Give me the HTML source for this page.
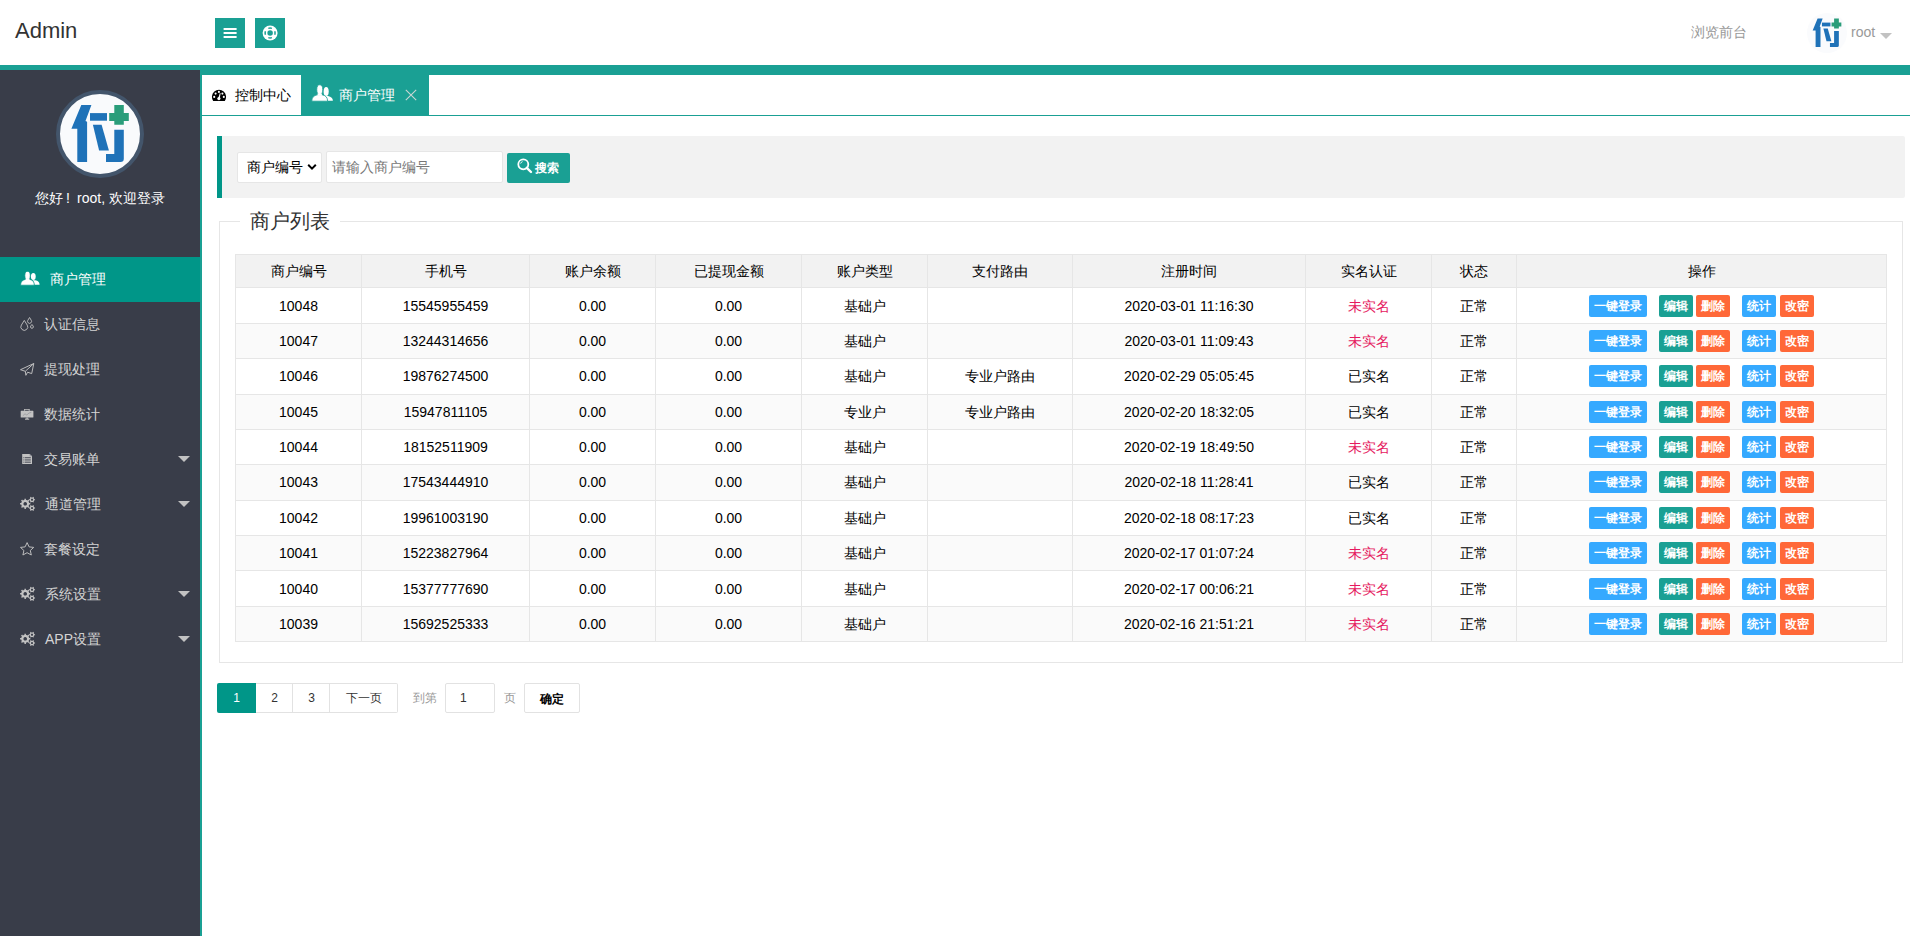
<!DOCTYPE html>
<html><head><meta charset="utf-8"><title>Admin</title>
<style>
*{margin:0;padding:0;box-sizing:border-box}
html,body{width:1910px;height:936px;overflow:hidden;background:#fff}
body{position:relative;font-family:"Liberation Sans",sans-serif;font-size:14px;color:#333}
.a{position:absolute}
.t{position:absolute;white-space:nowrap}
.c{text-align:center}
.ln{position:absolute;background:#e6e6e6}
.btn{position:absolute;height:22px;line-height:22px;color:#fff;font-size:12px;font-weight:bold;text-align:center;border-radius:2px}
.menu{position:absolute;left:0;width:200px;height:45px;color:#d4d4d4}
.menu .tx{position:absolute;left:44px;top:0;line-height:45px;font-size:14px}
.menu svg{position:absolute}
.caret{position:absolute;left:178px;top:19px;width:0;height:0;border-left:6px solid transparent;border-right:6px solid transparent;border-top:6px solid #c2c2c2}
</style></head><body>

<div class="t" style="left:15px;top:16px;font-size:22px;line-height:30px;color:#333">Admin</div>
<div class="a" style="left:215px;top:18px;width:30px;height:30px;background:#1aa094"><svg width="30" height="30" style="position:absolute;left:0;top:0"><rect x="8.6" y="10" width="13" height="2" fill="#fff"/><rect x="8.6" y="14" width="13" height="2" fill="#fff"/><rect x="8.6" y="18" width="13" height="2" fill="#fff"/></svg></div>
<div class="a" style="left:255px;top:18px;width:30px;height:30px;background:#1aa094"><svg width="30" height="30" style="position:absolute;left:0;top:0"><g transform="translate(15.1 15)"><circle r="7.5" fill="#fff"/><circle r="2.75" fill="#1aa094"/><path d="M4.67 -1.79A5 5 0 0 1 4.67 1.79M1.79 4.67A5 5 0 0 1 -1.79 4.67M-4.67 1.79A5 5 0 0 1 -4.67 -1.79M-1.79 -4.67A5 5 0 0 1 1.79 -4.67" fill="none" stroke="#1aa094" stroke-width="1.5"/></g></svg></div>
<div class="t" style="left:1691px;top:22px;line-height:20px;color:#999">浏览前台</div>
<svg class="a" style="left:1805px;top:11px" width="44" height="44" viewBox="1805 11 44 44"><circle cx="1827" cy="33" r="20" fill="#fafbfd"/><g transform="translate(1827 32.85) scale(0.5) translate(-100.1 -133.6)"><path fill="#1f72b8" d="M81.3 105.1H91.4L85.5 121.1L87.1 121.8V162.1H77.3V128.7H71.4Z"/>
<rect fill="#1f72b8" x="90" y="113.1" width="17" height="7.6"/>
<path fill="#1f72b8" d="M92.9 124.7H101.6L108.9 150.5H99.1Z"/>
<path fill="#1f72b8" d="M114.3 129.8H123.8V158.8A3.3 3.3 0 0 1 120.5 162.1H106V154.1H114.3Z"/>
<path fill="#2a9d7a" d="M114.3 105.1H123.8V113.1H128.8V121.1H123.8V124.7H114.3V121.1H109.2V113.1H114.3Z"/></g></svg>
<div class="t" style="left:1851px;top:22px;line-height:20px;color:#999">root</div>
<div class="a" style="left:1880px;top:33px;width:0;height:0;border-left:6px solid transparent;border-right:6px solid transparent;border-top:6px solid #c2c2c2"></div>
<div class="a" style="left:0;top:65px;width:1910px;height:5px;background:#1aa094"></div>
<div class="a" style="left:0;top:70px;width:200px;height:866px;background:#393d49"></div>
<div class="a" style="left:200px;top:70px;width:2px;height:866px;background:#1aa094"></div>
<div class="a" style="left:202px;top:70px;width:1708px;height:5px;background:#1aa094"></div>
<svg class="a" style="left:56px;top:90px" width="88" height="88" viewBox="56 90 88 88"><circle cx="100" cy="134" r="42" fill="#f9fafc" stroke="#43556b" stroke-width="4"/><path fill="#1f72b8" d="M81.3 105.1H91.4L85.5 121.1L87.1 121.8V162.1H77.3V128.7H71.4Z"/>
<rect fill="#1f72b8" x="90" y="113.1" width="17" height="7.6"/>
<path fill="#1f72b8" d="M92.9 124.7H101.6L108.9 150.5H99.1Z"/>
<path fill="#1f72b8" d="M114.3 129.8H123.8V158.8A3.3 3.3 0 0 1 120.5 162.1H106V154.1H114.3Z"/>
<path fill="#2a9d7a" d="M114.3 105.1H123.8V113.1H128.8V121.1H123.8V124.7H114.3V121.1H109.2V113.1H114.3Z"/></svg>
<div class="t c" style="left:0;top:188px;width:200px;line-height:20px;color:#fff">您好<span style="display:inline-block;width:14px;padding-left:3px;text-align:left">!</span>root, 欢迎登录</div>
<div class="menu" style="top:257px;background:#009688;color:#fff"><div class="tx" style="left:50px">商户管理</div></div>
<div class="menu" style="top:302px"><div class="tx" style="left:44px">认证信息</div></div>
<div class="menu" style="top:347px"><div class="tx" style="left:44px">提现处理</div></div>
<div class="menu" style="top:392px"><div class="tx" style="left:44px">数据统计</div></div>
<div class="menu" style="top:437px"><div class="tx" style="left:44px">交易账单</div><div class="caret"></div></div>
<div class="menu" style="top:482px"><div class="tx" style="left:45px">通道管理</div><div class="caret"></div></div>
<div class="menu" style="top:527px"><div class="tx" style="left:44px">套餐设定</div></div>
<div class="menu" style="top:572px"><div class="tx" style="left:45px">系统设置</div><div class="caret"></div></div>
<div class="menu" style="top:617px"><div class="tx" style="left:45px">APP设置</div><div class="caret"></div></div>
<svg class="a" style="left:20px;top:270px" width="21" height="16" viewBox="20 270 21 16"><g fill="#fff"><ellipse cx="33.3" cy="276.4" rx="2.4" ry="3.5"/><path d="M32.3 280.3L35.2 280.3C38.2 280.9 39.6 282.2 39.6 284.8L34.3 284.8C34.2 282.6 33.6 281.2 32.3 280.3Z"/></g><g fill="#fff" stroke="#009688" stroke-width="0.7"><ellipse cx="27.55" cy="275.6" rx="2.7" ry="4.2"/><path d="M20.6 285.2C20.6 281.6 22.3 280.1 25.3 279.4L29.8 279.4C32.8 280.1 34.3 281.6 34.3 285.2Z"/></g><rect x="25.6" y="278.5" width="3.9" height="2" fill="#fff"/></svg>
<svg class="a" style="left:18px;top:315px" width="18" height="18" viewBox="18 315 18 18"><g fill="none" stroke="#c2c2c2" stroke-width="0.9"><path d="M24.3 320.4 L21.38 325.07 A3.45 3.45 0 1 0 27.22 325.07 Z"/><path d="M29.55 317.5 L27.84 320.31 A2.0 2.0 0 1 0 31.26 320.31 Z"/><path d="M31.95 324.5 L30.81 325.96 A1.45 1.45 0 1 0 33.09 325.96 Z"/></g></svg>
<svg class="a" style="left:18px;top:361px" width="18" height="17" viewBox="18 361 18 17"><g fill="none" stroke="#c2c2c2" stroke-width="0.95" stroke-linejoin="round"><path d="M20.5 369.7L33.8 363.5L31.7 373.6L27.6 372.2L25.9 375.3L25.3 371.3Z"/><path d="M25.3 371.3L33.8 363.5"/></g></svg>
<svg class="a" style="left:18px;top:407px" width="18" height="14" viewBox="18 407 18 14"><g fill="#c2c2c2"><path d="M24.1 409H29.7V410.8H28.7V409.8H25.1V410.8H24.1Z"/><rect x="20.7" y="410.8" width="12.7" height="6.8" rx="0.6"/><rect x="26.3" y="417.6" width="1.6" height="1.2"/><rect x="25" y="418.6" width="4.2" height="1.1"/></g><path d="M22.8 415.8L25 413.8L26.8 415L29 413L31.3 412.4" fill="none" stroke="#8a8c92" stroke-width="0.6"/></svg>
<svg class="a" style="left:20px;top:452px" width="14" height="14" viewBox="20 452 14 14"><path d="M22.2 453.9H29.6L32 456.3V464H22.2Z" fill="#c2c2c2"/><path d="M29.6 453.9V456.3H32" fill="#9a9ca2"/><g fill="#393d49"><rect x="23.4" y="457.3" width="1" height="0.9"/><rect x="25" y="457.3" width="5.8" height="0.9"/><rect x="23.4" y="459.5" width="1" height="0.9"/><rect x="25" y="459.5" width="5.8" height="0.9"/><rect x="23.4" y="461.7" width="1" height="0.9"/><rect x="25" y="461.7" width="5.8" height="0.9"/></g></svg>
<svg class="a" style="left:18px;top:540px" width="18" height="17" viewBox="18 540 18 17"><path d="M27.1 542.6L29.1 546.9L33.7 547.4L30.3 550.5L31.3 555L27.1 552.7L22.9 555L23.9 550.5L20.5 547.4L25.1 546.9Z" fill="none" stroke="#c2c2c2" stroke-width="0.95" stroke-linejoin="round"/></svg>
<svg class="a" style="left:18px;top:494px" width="18" height="18" viewBox="18 494 18 18"><g fill="#c2c2c2" fill-rule="evenodd"><path d="M29.02 502.62 L29.14 503.11 L30.34 503.04 L30.34 504.56 L29.14 504.49 L29.02 504.98 L28.74 505.67 L28.47 506.10 L29.38 506.90 L28.30 507.98 L27.50 507.07 L27.07 507.34 L26.38 507.62 L25.89 507.74 L25.96 508.94 L24.44 508.94 L24.51 507.74 L24.02 507.62 L23.33 507.34 L22.90 507.07 L22.10 507.98 L21.02 506.90 L21.93 506.10 L21.66 505.67 L21.38 504.98 L21.26 504.49 L20.06 504.56 L20.06 503.04 L21.26 503.11 L21.38 502.62 L21.66 501.93 L21.93 501.50 L21.02 500.70 L22.10 499.62 L22.90 500.53 L23.33 500.26 L24.02 499.98 L24.51 499.86 L24.44 498.66 L25.96 498.66 L25.89 499.86 L26.38 499.98 L27.07 500.26 L27.50 500.53 L28.30 499.62 L29.38 500.70 L28.47 501.50 L28.74 501.93Z M25.2 502.00 A1.8 1.8 0 1 0 25.21 502.00Z"/><path d="M34.12 498.81 L34.25 499.22 L35.05 499.15 L35.05 500.25 L34.25 500.18 L34.12 500.59 L33.83 501.09 L33.54 501.41 L34.00 502.07 L33.05 502.62 L32.71 501.89 L32.29 501.98 L31.71 501.98 L31.29 501.89 L30.95 502.62 L30.00 502.07 L30.46 501.41 L30.17 501.09 L29.88 500.59 L29.75 500.18 L28.95 500.25 L28.95 499.15 L29.75 499.22 L29.88 498.81 L30.17 498.31 L30.46 497.99 L30.00 497.33 L30.95 496.78 L31.29 497.51 L31.71 497.42 L32.29 497.42 L32.71 497.51 L33.05 496.78 L34.00 497.33 L33.54 497.99 L33.83 498.31Z M32 498.60 A1.1 1.1 0 1 0 32.01 498.60Z"/><path d="M34.12 507.11 L34.25 507.52 L35.05 507.45 L35.05 508.55 L34.25 508.48 L34.12 508.89 L33.83 509.39 L33.54 509.71 L34.00 510.37 L33.05 510.92 L32.71 510.19 L32.29 510.28 L31.71 510.28 L31.29 510.19 L30.95 510.92 L30.00 510.37 L30.46 509.71 L30.17 509.39 L29.88 508.89 L29.75 508.48 L28.95 508.55 L28.95 507.45 L29.75 507.52 L29.88 507.11 L30.17 506.61 L30.46 506.29 L30.00 505.63 L30.95 505.08 L31.29 505.81 L31.71 505.72 L32.29 505.72 L32.71 505.81 L33.05 505.08 L34.00 505.63 L33.54 506.29 L33.83 506.61Z M32 506.90 A1.1 1.1 0 1 0 32.01 506.90Z"/></g></svg>
<svg class="a" style="left:18px;top:584px" width="18" height="18" viewBox="18 584 18 18"><g fill="#c2c2c2" fill-rule="evenodd"><path d="M29.02 592.62 L29.14 593.11 L30.34 593.04 L30.34 594.56 L29.14 594.49 L29.02 594.98 L28.74 595.67 L28.47 596.10 L29.38 596.90 L28.30 597.98 L27.50 597.07 L27.07 597.34 L26.38 597.62 L25.89 597.74 L25.96 598.94 L24.44 598.94 L24.51 597.74 L24.02 597.62 L23.33 597.34 L22.90 597.07 L22.10 597.98 L21.02 596.90 L21.93 596.10 L21.66 595.67 L21.38 594.98 L21.26 594.49 L20.06 594.56 L20.06 593.04 L21.26 593.11 L21.38 592.62 L21.66 591.93 L21.93 591.50 L21.02 590.70 L22.10 589.62 L22.90 590.53 L23.33 590.26 L24.02 589.98 L24.51 589.86 L24.44 588.66 L25.96 588.66 L25.89 589.86 L26.38 589.98 L27.07 590.26 L27.50 590.53 L28.30 589.62 L29.38 590.70 L28.47 591.50 L28.74 591.93Z M25.2 592.00 A1.8 1.8 0 1 0 25.21 592.00Z"/><path d="M34.12 588.81 L34.25 589.22 L35.05 589.15 L35.05 590.25 L34.25 590.18 L34.12 590.59 L33.83 591.09 L33.54 591.41 L34.00 592.07 L33.05 592.62 L32.71 591.89 L32.29 591.98 L31.71 591.98 L31.29 591.89 L30.95 592.62 L30.00 592.07 L30.46 591.41 L30.17 591.09 L29.88 590.59 L29.75 590.18 L28.95 590.25 L28.95 589.15 L29.75 589.22 L29.88 588.81 L30.17 588.31 L30.46 587.99 L30.00 587.33 L30.95 586.78 L31.29 587.51 L31.71 587.42 L32.29 587.42 L32.71 587.51 L33.05 586.78 L34.00 587.33 L33.54 587.99 L33.83 588.31Z M32 588.60 A1.1 1.1 0 1 0 32.01 588.60Z"/><path d="M34.12 597.11 L34.25 597.52 L35.05 597.45 L35.05 598.55 L34.25 598.48 L34.12 598.89 L33.83 599.39 L33.54 599.71 L34.00 600.37 L33.05 600.92 L32.71 600.19 L32.29 600.28 L31.71 600.28 L31.29 600.19 L30.95 600.92 L30.00 600.37 L30.46 599.71 L30.17 599.39 L29.88 598.89 L29.75 598.48 L28.95 598.55 L28.95 597.45 L29.75 597.52 L29.88 597.11 L30.17 596.61 L30.46 596.29 L30.00 595.63 L30.95 595.08 L31.29 595.81 L31.71 595.72 L32.29 595.72 L32.71 595.81 L33.05 595.08 L34.00 595.63 L33.54 596.29 L33.83 596.61Z M32 596.90 A1.1 1.1 0 1 0 32.01 596.90Z"/></g></svg>
<svg class="a" style="left:18px;top:629px" width="18" height="18" viewBox="18 629 18 18"><g fill="#c2c2c2" fill-rule="evenodd"><path d="M29.02 637.62 L29.14 638.11 L30.34 638.04 L30.34 639.56 L29.14 639.49 L29.02 639.98 L28.74 640.67 L28.47 641.10 L29.38 641.90 L28.30 642.98 L27.50 642.07 L27.07 642.34 L26.38 642.62 L25.89 642.74 L25.96 643.94 L24.44 643.94 L24.51 642.74 L24.02 642.62 L23.33 642.34 L22.90 642.07 L22.10 642.98 L21.02 641.90 L21.93 641.10 L21.66 640.67 L21.38 639.98 L21.26 639.49 L20.06 639.56 L20.06 638.04 L21.26 638.11 L21.38 637.62 L21.66 636.93 L21.93 636.50 L21.02 635.70 L22.10 634.62 L22.90 635.53 L23.33 635.26 L24.02 634.98 L24.51 634.86 L24.44 633.66 L25.96 633.66 L25.89 634.86 L26.38 634.98 L27.07 635.26 L27.50 635.53 L28.30 634.62 L29.38 635.70 L28.47 636.50 L28.74 636.93Z M25.2 637.00 A1.8 1.8 0 1 0 25.21 637.00Z"/><path d="M34.12 633.81 L34.25 634.22 L35.05 634.15 L35.05 635.25 L34.25 635.18 L34.12 635.59 L33.83 636.09 L33.54 636.41 L34.00 637.07 L33.05 637.62 L32.71 636.89 L32.29 636.98 L31.71 636.98 L31.29 636.89 L30.95 637.62 L30.00 637.07 L30.46 636.41 L30.17 636.09 L29.88 635.59 L29.75 635.18 L28.95 635.25 L28.95 634.15 L29.75 634.22 L29.88 633.81 L30.17 633.31 L30.46 632.99 L30.00 632.33 L30.95 631.78 L31.29 632.51 L31.71 632.42 L32.29 632.42 L32.71 632.51 L33.05 631.78 L34.00 632.33 L33.54 632.99 L33.83 633.31Z M32 633.60 A1.1 1.1 0 1 0 32.01 633.60Z"/><path d="M34.12 642.11 L34.25 642.52 L35.05 642.45 L35.05 643.55 L34.25 643.48 L34.12 643.89 L33.83 644.39 L33.54 644.71 L34.00 645.37 L33.05 645.92 L32.71 645.19 L32.29 645.28 L31.71 645.28 L31.29 645.19 L30.95 645.92 L30.00 645.37 L30.46 644.71 L30.17 644.39 L29.88 643.89 L29.75 643.48 L28.95 643.55 L28.95 642.45 L29.75 642.52 L29.88 642.11 L30.17 641.61 L30.46 641.29 L30.00 640.63 L30.95 640.08 L31.29 640.81 L31.71 640.72 L32.29 640.72 L32.71 640.81 L33.05 640.08 L34.00 640.63 L33.54 641.29 L33.83 641.61Z M32 641.90 A1.1 1.1 0 1 0 32.01 641.90Z"/></g></svg>
<div class="a" style="left:202px;top:115px;width:1708px;height:1px;background:#1aa094"></div>
<svg class="a" style="left:210px;top:88px" width="18" height="14" viewBox="210 88 18 14"><path d="M213.2 100.9A7.05 7.05 0 1 1 224.8 100.9Z" fill="#000"/><g fill="#fff"><circle cx="218.9" cy="91.9" r="1.05"/><circle cx="215.6" cy="93.6" r="1.05"/><circle cx="222.4" cy="93.6" r="1.05"/><circle cx="214.2" cy="96.9" r="1.05"/><circle cx="223.8" cy="96.9" r="1.05"/><circle cx="218.9" cy="98.6" r="1.6"/><path d="M218.1 98.4L219.9 93.1L220.6 93.3L219.7 98.8Z"/></g></svg>
<div class="t" style="left:235px;top:85px;line-height:20px;color:#000">控制中心</div>
<div class="a" style="left:301px;top:70px;width:128px;height:45px;background:#1aa094"></div>
<svg class="a" style="left:310px;top:83px" width="24" height="19" viewBox="310 83 24 19"><g fill="#fff"><ellipse cx="326.15" cy="91.4" rx="2.55" ry="4.5"/><path d="M325 96L328 96C331.2 96.8 332.9 98 332.9 100.8H327.2C327.1 98.8 326.5 97 325 96Z"/></g><g fill="#fff" stroke="#1aa094" stroke-width="0.8"><ellipse cx="319.75" cy="89.7" rx="3" ry="4.9"/><path d="M311.8 101.2C311.8 97.4 313.7 95.6 317.3 94.8L322.2 94.8C325.8 95.6 327.6 97.4 327.6 101.2Z"/></g><rect x="317.6" y="93.6" width="4.3" height="2.2" fill="#fff"/></svg>
<div class="t" style="left:339px;top:85px;line-height:20px;color:#fff">商户管理</div>
<svg class="a" style="left:405px;top:89px" width="12" height="12" viewBox="0 0 12 12"><path d="M0.8 0.8L11.2 11.2M11.2 0.8L0.8 11.2" stroke="#c9d6d4" stroke-width="1.1"/></svg>
<div class="a" style="left:217px;top:136px;width:1688px;height:62px;background:#f2f2f2;border-left:5px solid #009688;border-radius:0 2px 2px 0"></div>
<div class="a" style="left:237px;top:152px;width:85px;height:31px;background:#fff;border:1px solid #e6e6e6;border-radius:2px"></div>
<div class="t" style="left:247px;top:157px;line-height:20px;color:#000">商户编号</div>
<svg class="a" style="left:307px;top:163px" width="10" height="8" viewBox="0 0 10 8"><path d="M1.2 1.8L5 5.6L8.8 1.8" fill="none" stroke="#000" stroke-width="2"/></svg>
<div class="a" style="left:326px;top:151px;width:177px;height:32px;background:#fff;border:1px solid #e6e6e6;border-radius:2px"></div>
<div class="t" style="left:332px;top:157px;line-height:20px;color:#777">请输入商户编号</div>
<div class="a" style="left:507px;top:153px;width:63px;height:30px;background:#1aa094;border-radius:2px"></div>
<svg class="a" style="left:517px;top:158px" width="16" height="16" viewBox="0 0 16 16"><circle cx="6.3" cy="6.3" r="5" fill="none" stroke="#fff" stroke-width="1.8"/><path d="M9.8 9.8L14 14" stroke="#fff" stroke-width="2.4" stroke-linecap="round"/><path d="M3.6 5.5A3 3 0 0 1 5.5 3.6" stroke="#fff" stroke-width="1" fill="none"/></svg>
<div class="t" style="left:535px;top:158px;line-height:20px;font-size:12px;font-weight:bold;color:#fff">搜索</div>
<div class="a" style="left:219px;top:221px;width:1684px;height:442px;border:1px solid #e6e6e6"></div>
<div class="a" style="left:240px;top:210px;width:100px;height:25px;background:#fff"></div>
<div class="t" style="left:250px;top:206px;line-height:30px;font-size:20px;color:#333">商户列表</div>
<div class="a" style="left:235px;top:254px;width:1652px;height:33px;background:#f2f2f2"></div>
<div class="a" style="left:235px;top:323px;width:1652px;height:35px;background:#fafafa"></div>
<div class="a" style="left:235px;top:394px;width:1652px;height:35px;background:#fafafa"></div>
<div class="a" style="left:235px;top:464px;width:1652px;height:36px;background:#fafafa"></div>
<div class="a" style="left:235px;top:535px;width:1652px;height:35px;background:#fafafa"></div>
<div class="a" style="left:235px;top:606px;width:1652px;height:35px;background:#fafafa"></div>
<div class="ln" style="left:235px;top:254px;width:1652px;height:1px"></div>
<div class="ln" style="left:235px;top:287px;width:1652px;height:1px"></div>
<div class="ln" style="left:235px;top:323px;width:1652px;height:1px"></div>
<div class="ln" style="left:235px;top:358px;width:1652px;height:1px"></div>
<div class="ln" style="left:235px;top:394px;width:1652px;height:1px"></div>
<div class="ln" style="left:235px;top:429px;width:1652px;height:1px"></div>
<div class="ln" style="left:235px;top:464px;width:1652px;height:1px"></div>
<div class="ln" style="left:235px;top:500px;width:1652px;height:1px"></div>
<div class="ln" style="left:235px;top:535px;width:1652px;height:1px"></div>
<div class="ln" style="left:235px;top:570px;width:1652px;height:1px"></div>
<div class="ln" style="left:235px;top:606px;width:1652px;height:1px"></div>
<div class="ln" style="left:235px;top:641px;width:1652px;height:1px"></div>
<div class="ln" style="left:235px;top:254px;width:1px;height:388px"></div>
<div class="ln" style="left:361px;top:254px;width:1px;height:388px"></div>
<div class="ln" style="left:529px;top:254px;width:1px;height:388px"></div>
<div class="ln" style="left:655px;top:254px;width:1px;height:388px"></div>
<div class="ln" style="left:801px;top:254px;width:1px;height:388px"></div>
<div class="ln" style="left:927px;top:254px;width:1px;height:388px"></div>
<div class="ln" style="left:1072px;top:254px;width:1px;height:388px"></div>
<div class="ln" style="left:1305px;top:254px;width:1px;height:388px"></div>
<div class="ln" style="left:1431px;top:254px;width:1px;height:388px"></div>
<div class="ln" style="left:1516px;top:254px;width:1px;height:388px"></div>
<div class="ln" style="left:1886px;top:254px;width:1px;height:388px"></div>
<div class="t c" style="left:236px;top:261px;width:125px;line-height:20px;color:#000">商户编号</div>
<div class="t c" style="left:362px;top:261px;width:167px;line-height:20px;color:#000">手机号</div>
<div class="t c" style="left:530px;top:261px;width:125px;line-height:20px;color:#000">账户余额</div>
<div class="t c" style="left:656px;top:261px;width:145px;line-height:20px;color:#000">已提现金额</div>
<div class="t c" style="left:802px;top:261px;width:125px;line-height:20px;color:#000">账户类型</div>
<div class="t c" style="left:928px;top:261px;width:144px;line-height:20px;color:#000">支付路由</div>
<div class="t c" style="left:1073px;top:261px;width:232px;line-height:20px;color:#000">注册时间</div>
<div class="t c" style="left:1306px;top:261px;width:125px;line-height:20px;color:#000">实名认证</div>
<div class="t c" style="left:1432px;top:261px;width:84px;line-height:20px;color:#000">状态</div>
<div class="t c" style="left:1517px;top:261px;width:369px;line-height:20px;color:#000">操作</div>
<div class="t c" style="left:236px;top:296px;width:125px;line-height:20px;color:#000">10048</div>
<div class="t c" style="left:362px;top:296px;width:167px;line-height:20px;color:#000">15545955459</div>
<div class="t c" style="left:530px;top:296px;width:125px;line-height:20px;color:#000">0.00</div>
<div class="t c" style="left:656px;top:296px;width:145px;line-height:20px;color:#000">0.00</div>
<div class="t c" style="left:802px;top:296px;width:125px;line-height:20px;color:#000">基础户</div>
<div class="t c" style="left:928px;top:296px;width:144px;line-height:20px;color:#000"></div>
<div class="t c" style="left:1073px;top:296px;width:232px;line-height:20px;color:#000">2020-03-01 11:16:30</div>
<div class="t c" style="left:1306px;top:296px;width:125px;line-height:20px;color:#e5195e">未实名</div>
<div class="t c" style="left:1432px;top:296px;width:84px;line-height:20px;color:#000">正常</div>
<div class="btn" style="left:1589px;top:295px;width:58px;background:#35a9ff">一键登录</div>
<div class="btn" style="left:1659px;top:295px;width:34px;background:#1aa094">编辑</div>
<div class="btn" style="left:1696px;top:295px;width:34px;background:#ff6838">删除</div>
<div class="btn" style="left:1742px;top:295px;width:34px;background:#35a9ff">统计</div>
<div class="btn" style="left:1780px;top:295px;width:34px;background:#ff6838">改密</div>
<div class="t c" style="left:236px;top:331px;width:125px;line-height:20px;color:#000">10047</div>
<div class="t c" style="left:362px;top:331px;width:167px;line-height:20px;color:#000">13244314656</div>
<div class="t c" style="left:530px;top:331px;width:125px;line-height:20px;color:#000">0.00</div>
<div class="t c" style="left:656px;top:331px;width:145px;line-height:20px;color:#000">0.00</div>
<div class="t c" style="left:802px;top:331px;width:125px;line-height:20px;color:#000">基础户</div>
<div class="t c" style="left:928px;top:331px;width:144px;line-height:20px;color:#000"></div>
<div class="t c" style="left:1073px;top:331px;width:232px;line-height:20px;color:#000">2020-03-01 11:09:43</div>
<div class="t c" style="left:1306px;top:331px;width:125px;line-height:20px;color:#e5195e">未实名</div>
<div class="t c" style="left:1432px;top:331px;width:84px;line-height:20px;color:#000">正常</div>
<div class="btn" style="left:1589px;top:330px;width:58px;background:#35a9ff">一键登录</div>
<div class="btn" style="left:1659px;top:330px;width:34px;background:#1aa094">编辑</div>
<div class="btn" style="left:1696px;top:330px;width:34px;background:#ff6838">删除</div>
<div class="btn" style="left:1742px;top:330px;width:34px;background:#35a9ff">统计</div>
<div class="btn" style="left:1780px;top:330px;width:34px;background:#ff6838">改密</div>
<div class="t c" style="left:236px;top:366px;width:125px;line-height:20px;color:#000">10046</div>
<div class="t c" style="left:362px;top:366px;width:167px;line-height:20px;color:#000">19876274500</div>
<div class="t c" style="left:530px;top:366px;width:125px;line-height:20px;color:#000">0.00</div>
<div class="t c" style="left:656px;top:366px;width:145px;line-height:20px;color:#000">0.00</div>
<div class="t c" style="left:802px;top:366px;width:125px;line-height:20px;color:#000">基础户</div>
<div class="t c" style="left:928px;top:366px;width:144px;line-height:20px;color:#000">专业户路由</div>
<div class="t c" style="left:1073px;top:366px;width:232px;line-height:20px;color:#000">2020-02-29 05:05:45</div>
<div class="t c" style="left:1306px;top:366px;width:125px;line-height:20px;color:#000">已实名</div>
<div class="t c" style="left:1432px;top:366px;width:84px;line-height:20px;color:#000">正常</div>
<div class="btn" style="left:1589px;top:365px;width:58px;background:#35a9ff">一键登录</div>
<div class="btn" style="left:1659px;top:365px;width:34px;background:#1aa094">编辑</div>
<div class="btn" style="left:1696px;top:365px;width:34px;background:#ff6838">删除</div>
<div class="btn" style="left:1742px;top:365px;width:34px;background:#35a9ff">统计</div>
<div class="btn" style="left:1780px;top:365px;width:34px;background:#ff6838">改密</div>
<div class="t c" style="left:236px;top:402px;width:125px;line-height:20px;color:#000">10045</div>
<div class="t c" style="left:362px;top:402px;width:167px;line-height:20px;color:#000">15947811105</div>
<div class="t c" style="left:530px;top:402px;width:125px;line-height:20px;color:#000">0.00</div>
<div class="t c" style="left:656px;top:402px;width:145px;line-height:20px;color:#000">0.00</div>
<div class="t c" style="left:802px;top:402px;width:125px;line-height:20px;color:#000">专业户</div>
<div class="t c" style="left:928px;top:402px;width:144px;line-height:20px;color:#000">专业户路由</div>
<div class="t c" style="left:1073px;top:402px;width:232px;line-height:20px;color:#000">2020-02-20 18:32:05</div>
<div class="t c" style="left:1306px;top:402px;width:125px;line-height:20px;color:#000">已实名</div>
<div class="t c" style="left:1432px;top:402px;width:84px;line-height:20px;color:#000">正常</div>
<div class="btn" style="left:1589px;top:401px;width:58px;background:#35a9ff">一键登录</div>
<div class="btn" style="left:1659px;top:401px;width:34px;background:#1aa094">编辑</div>
<div class="btn" style="left:1696px;top:401px;width:34px;background:#ff6838">删除</div>
<div class="btn" style="left:1742px;top:401px;width:34px;background:#35a9ff">统计</div>
<div class="btn" style="left:1780px;top:401px;width:34px;background:#ff6838">改密</div>
<div class="t c" style="left:236px;top:437px;width:125px;line-height:20px;color:#000">10044</div>
<div class="t c" style="left:362px;top:437px;width:167px;line-height:20px;color:#000">18152511909</div>
<div class="t c" style="left:530px;top:437px;width:125px;line-height:20px;color:#000">0.00</div>
<div class="t c" style="left:656px;top:437px;width:145px;line-height:20px;color:#000">0.00</div>
<div class="t c" style="left:802px;top:437px;width:125px;line-height:20px;color:#000">基础户</div>
<div class="t c" style="left:928px;top:437px;width:144px;line-height:20px;color:#000"></div>
<div class="t c" style="left:1073px;top:437px;width:232px;line-height:20px;color:#000">2020-02-19 18:49:50</div>
<div class="t c" style="left:1306px;top:437px;width:125px;line-height:20px;color:#e5195e">未实名</div>
<div class="t c" style="left:1432px;top:437px;width:84px;line-height:20px;color:#000">正常</div>
<div class="btn" style="left:1589px;top:436px;width:58px;background:#35a9ff">一键登录</div>
<div class="btn" style="left:1659px;top:436px;width:34px;background:#1aa094">编辑</div>
<div class="btn" style="left:1696px;top:436px;width:34px;background:#ff6838">删除</div>
<div class="btn" style="left:1742px;top:436px;width:34px;background:#35a9ff">统计</div>
<div class="btn" style="left:1780px;top:436px;width:34px;background:#ff6838">改密</div>
<div class="t c" style="left:236px;top:472px;width:125px;line-height:20px;color:#000">10043</div>
<div class="t c" style="left:362px;top:472px;width:167px;line-height:20px;color:#000">17543444910</div>
<div class="t c" style="left:530px;top:472px;width:125px;line-height:20px;color:#000">0.00</div>
<div class="t c" style="left:656px;top:472px;width:145px;line-height:20px;color:#000">0.00</div>
<div class="t c" style="left:802px;top:472px;width:125px;line-height:20px;color:#000">基础户</div>
<div class="t c" style="left:928px;top:472px;width:144px;line-height:20px;color:#000"></div>
<div class="t c" style="left:1073px;top:472px;width:232px;line-height:20px;color:#000">2020-02-18 11:28:41</div>
<div class="t c" style="left:1306px;top:472px;width:125px;line-height:20px;color:#000">已实名</div>
<div class="t c" style="left:1432px;top:472px;width:84px;line-height:20px;color:#000">正常</div>
<div class="btn" style="left:1589px;top:471px;width:58px;background:#35a9ff">一键登录</div>
<div class="btn" style="left:1659px;top:471px;width:34px;background:#1aa094">编辑</div>
<div class="btn" style="left:1696px;top:471px;width:34px;background:#ff6838">删除</div>
<div class="btn" style="left:1742px;top:471px;width:34px;background:#35a9ff">统计</div>
<div class="btn" style="left:1780px;top:471px;width:34px;background:#ff6838">改密</div>
<div class="t c" style="left:236px;top:508px;width:125px;line-height:20px;color:#000">10042</div>
<div class="t c" style="left:362px;top:508px;width:167px;line-height:20px;color:#000">19961003190</div>
<div class="t c" style="left:530px;top:508px;width:125px;line-height:20px;color:#000">0.00</div>
<div class="t c" style="left:656px;top:508px;width:145px;line-height:20px;color:#000">0.00</div>
<div class="t c" style="left:802px;top:508px;width:125px;line-height:20px;color:#000">基础户</div>
<div class="t c" style="left:928px;top:508px;width:144px;line-height:20px;color:#000"></div>
<div class="t c" style="left:1073px;top:508px;width:232px;line-height:20px;color:#000">2020-02-18 08:17:23</div>
<div class="t c" style="left:1306px;top:508px;width:125px;line-height:20px;color:#000">已实名</div>
<div class="t c" style="left:1432px;top:508px;width:84px;line-height:20px;color:#000">正常</div>
<div class="btn" style="left:1589px;top:507px;width:58px;background:#35a9ff">一键登录</div>
<div class="btn" style="left:1659px;top:507px;width:34px;background:#1aa094">编辑</div>
<div class="btn" style="left:1696px;top:507px;width:34px;background:#ff6838">删除</div>
<div class="btn" style="left:1742px;top:507px;width:34px;background:#35a9ff">统计</div>
<div class="btn" style="left:1780px;top:507px;width:34px;background:#ff6838">改密</div>
<div class="t c" style="left:236px;top:543px;width:125px;line-height:20px;color:#000">10041</div>
<div class="t c" style="left:362px;top:543px;width:167px;line-height:20px;color:#000">15223827964</div>
<div class="t c" style="left:530px;top:543px;width:125px;line-height:20px;color:#000">0.00</div>
<div class="t c" style="left:656px;top:543px;width:145px;line-height:20px;color:#000">0.00</div>
<div class="t c" style="left:802px;top:543px;width:125px;line-height:20px;color:#000">基础户</div>
<div class="t c" style="left:928px;top:543px;width:144px;line-height:20px;color:#000"></div>
<div class="t c" style="left:1073px;top:543px;width:232px;line-height:20px;color:#000">2020-02-17 01:07:24</div>
<div class="t c" style="left:1306px;top:543px;width:125px;line-height:20px;color:#e5195e">未实名</div>
<div class="t c" style="left:1432px;top:543px;width:84px;line-height:20px;color:#000">正常</div>
<div class="btn" style="left:1589px;top:542px;width:58px;background:#35a9ff">一键登录</div>
<div class="btn" style="left:1659px;top:542px;width:34px;background:#1aa094">编辑</div>
<div class="btn" style="left:1696px;top:542px;width:34px;background:#ff6838">删除</div>
<div class="btn" style="left:1742px;top:542px;width:34px;background:#35a9ff">统计</div>
<div class="btn" style="left:1780px;top:542px;width:34px;background:#ff6838">改密</div>
<div class="t c" style="left:236px;top:579px;width:125px;line-height:20px;color:#000">10040</div>
<div class="t c" style="left:362px;top:579px;width:167px;line-height:20px;color:#000">15377777690</div>
<div class="t c" style="left:530px;top:579px;width:125px;line-height:20px;color:#000">0.00</div>
<div class="t c" style="left:656px;top:579px;width:145px;line-height:20px;color:#000">0.00</div>
<div class="t c" style="left:802px;top:579px;width:125px;line-height:20px;color:#000">基础户</div>
<div class="t c" style="left:928px;top:579px;width:144px;line-height:20px;color:#000"></div>
<div class="t c" style="left:1073px;top:579px;width:232px;line-height:20px;color:#000">2020-02-17 00:06:21</div>
<div class="t c" style="left:1306px;top:579px;width:125px;line-height:20px;color:#e5195e">未实名</div>
<div class="t c" style="left:1432px;top:579px;width:84px;line-height:20px;color:#000">正常</div>
<div class="btn" style="left:1589px;top:578px;width:58px;background:#35a9ff">一键登录</div>
<div class="btn" style="left:1659px;top:578px;width:34px;background:#1aa094">编辑</div>
<div class="btn" style="left:1696px;top:578px;width:34px;background:#ff6838">删除</div>
<div class="btn" style="left:1742px;top:578px;width:34px;background:#35a9ff">统计</div>
<div class="btn" style="left:1780px;top:578px;width:34px;background:#ff6838">改密</div>
<div class="t c" style="left:236px;top:614px;width:125px;line-height:20px;color:#000">10039</div>
<div class="t c" style="left:362px;top:614px;width:167px;line-height:20px;color:#000">15692525333</div>
<div class="t c" style="left:530px;top:614px;width:125px;line-height:20px;color:#000">0.00</div>
<div class="t c" style="left:656px;top:614px;width:145px;line-height:20px;color:#000">0.00</div>
<div class="t c" style="left:802px;top:614px;width:125px;line-height:20px;color:#000">基础户</div>
<div class="t c" style="left:928px;top:614px;width:144px;line-height:20px;color:#000"></div>
<div class="t c" style="left:1073px;top:614px;width:232px;line-height:20px;color:#000">2020-02-16 21:51:21</div>
<div class="t c" style="left:1306px;top:614px;width:125px;line-height:20px;color:#e5195e">未实名</div>
<div class="t c" style="left:1432px;top:614px;width:84px;line-height:20px;color:#000">正常</div>
<div class="btn" style="left:1589px;top:613px;width:58px;background:#35a9ff">一键登录</div>
<div class="btn" style="left:1659px;top:613px;width:34px;background:#1aa094">编辑</div>
<div class="btn" style="left:1696px;top:613px;width:34px;background:#ff6838">删除</div>
<div class="btn" style="left:1742px;top:613px;width:34px;background:#35a9ff">统计</div>
<div class="btn" style="left:1780px;top:613px;width:34px;background:#ff6838">改密</div>
<div class="a" style="left:217px;top:683px;width:39px;height:30px;background:#009688;border-radius:2px 0 0 2px"></div>
<div class="t c" style="left:217px;top:683px;width:39px;line-height:30px;font-size:12px;color:#fff">1</div>
<div class="a" style="left:256px;top:683px;width:142px;height:30px;border:1px solid #e2e2e2;border-left:none;border-radius:0 2px 2px 0"></div>
<div class="a" style="left:292px;top:683px;width:1px;height:30px;background:#e2e2e2"></div>
<div class="a" style="left:329px;top:683px;width:1px;height:30px;background:#e2e2e2"></div>
<div class="t c" style="left:256px;top:683px;width:37px;line-height:30px;font-size:12px;color:#333">2</div>
<div class="t c" style="left:293px;top:683px;width:37px;line-height:30px;font-size:12px;color:#333">3</div>
<div class="t c" style="left:330px;top:683px;width:68px;line-height:30px;font-size:12px;color:#333">下一页</div>
<div class="t" style="left:413px;top:683px;line-height:30px;font-size:12px;color:#999">到第</div>
<div class="a" style="left:445px;top:683px;width:50px;height:30px;border:1px solid #e2e2e2;border-radius:2px"></div>
<div class="t" style="left:460px;top:683px;line-height:30px;font-size:12px;color:#333">1</div>
<div class="t" style="left:504px;top:683px;line-height:30px;font-size:12px;color:#999">页</div>
<div class="a" style="left:524px;top:683px;width:56px;height:30px;border:1px solid #e2e2e2;border-radius:2px"></div>
<div class="t c" style="left:524px;top:684px;width:56px;line-height:30px;font-size:12px;font-weight:bold;color:#000">确定</div>
</body></html>
